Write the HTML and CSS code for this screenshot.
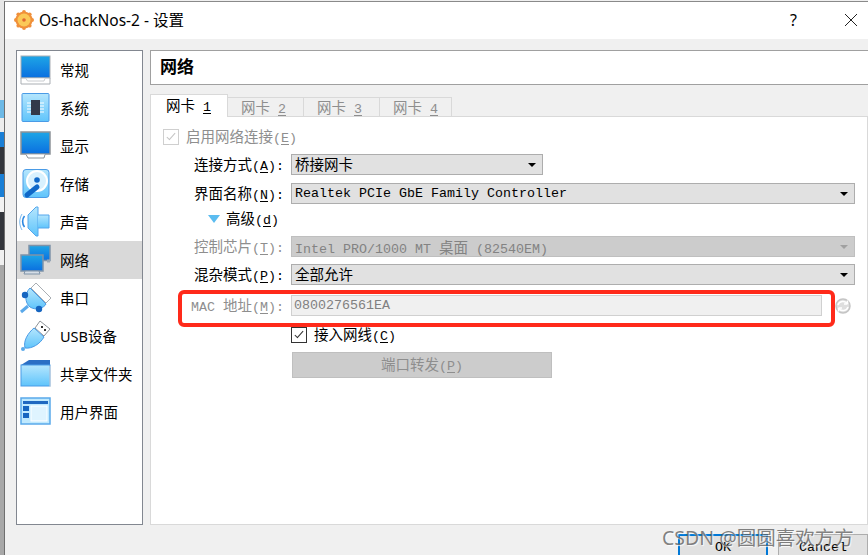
FILE: index.html
```html
<!DOCTYPE html>
<html lang="zh-CN">
<head>
    <meta charset="UTF-8">
    <title>Os-hackNos-2 - 设置</title>
    <link rel="stylesheet" href="styles.css">
</head>
<body>

<div class="desktop">
    <div class="d-light"></div>
    <div class="d-sky"></div>
    <div class="d-pale"></div>
    <div class="d-blue"></div>
    <div class="d-dark"></div>
    <div class="d-blue2"></div>
    <div class="d-white"></div>
    <div class="d-dark2"></div>
    <div class="d-pale2"></div>
    <div class="d-gray"></div>
</div>

<div class="window">
    <div class="titlebar">
        <svg class="app-icon" viewBox="0 0 20 20">
            <circle cx="10" cy="10" r="8.6" fill="#f0903a"/>
            <g fill="#f0903a">
                <circle cx="10" cy="1.9" r="1.9"/><circle cx="10" cy="18.1" r="1.9"/>
                <circle cx="1.9" cy="10" r="1.9"/><circle cx="18.1" cy="10" r="1.9"/>
                <circle cx="4.3" cy="4.3" r="1.9"/><circle cx="15.7" cy="4.3" r="1.9"/>
                <circle cx="4.3" cy="15.7" r="1.9"/><circle cx="15.7" cy="15.7" r="1.9"/>
            </g>
            <circle cx="10" cy="10" r="6.500" fill="#fbc957"/>
            <circle cx="10" cy="10" r="1.800" fill="#e0672f"/>
        </svg>
        <span class="title">Os-hackNos-2 - 设置</span>
        <span class="help">?</span>
        <svg class="close" viewBox="0 0 12 12"><path d="M0 0L12 12M12 0L0 12" stroke="#222" stroke-width="1" fill="none"/></svg>
    </div>

    <div class="content">
        <div class="sidebar">
            <div class="nav-item">
                <svg class="nav-icon" viewBox="0 0 32 32">
                    <defs>
                        <linearGradient id="screen" x1="0" y1="0" x2="0" y2="1"><stop offset="0" stop-color="#1ea6e6"/><stop offset="1" stop-color="#0a6fe0"/></linearGradient>
                        <linearGradient id="pale" x1="0" y1="0" x2="0" y2="1"><stop offset="0" stop-color="#b5e6fd"/><stop offset="1" stop-color="#5fc4fb"/></linearGradient>
                    </defs>
                    <rect x="1" y="2" width="29" height="22" fill="url(#screen)" stroke="#a9aeb3"/>
                    <path d="M1 24H30V30H1Z" fill="#fff" stroke="#a9aeb3"/>
                    <path d="M6 24.500L7.500 27H24L25 24.500" fill="#fff" stroke="#c9ccd0"/>
                </svg>
                <span>常规</span>
            </div>
            <div class="nav-item">
                <svg class="nav-icon" viewBox="0 0 32 32">
                    <rect x="2" y="1.500" width="27" height="28" rx="1" fill="url(#pale)" stroke="#4a9be6"/>
                    <path d="M7 11H24M7 14H24M7 17H24M7 20H24" stroke="#fff"/>
                    <rect x="11" y="8" width="9" height="15" fill="#333a4a"/>
                </svg>
                <span>系统</span>
            </div>
            <div class="nav-item">
                <svg class="nav-icon" viewBox="0 0 32 32">
                    <rect x="1" y="2" width="29" height="22" fill="url(#screen)" stroke="#8d9398" stroke-width="1.500"/>
                    <path d="M6 24.500L8 28H24L25 24.500" fill="#fff" stroke="#8d9398"/>
                </svg>
                <span>显示</span>
            </div>
            <div class="nav-item">
                <svg class="nav-icon" viewBox="0 0 32 32">
                    <rect x="3" y="1.500" width="26" height="28" rx="3" fill="url(#pale)" stroke="#4a9be6"/>
                    <circle cx="17" cy="13" r="11" fill="#fff"/>
                    <circle cx="17" cy="13" r="9" fill="#d8f1fe"/>
                    <circle cx="17" cy="12" r="2.800" fill="#0f68c8"/>
                    <path d="M7 27L17 19" stroke="#0f68c8" stroke-width="5" stroke-linecap="round"/>
                </svg>
                <span>存储</span>
            </div>
            <div class="nav-item">
                <svg class="nav-icon" viewBox="0 0 32 32">
                    <path d="M8 9L8 22L16 30H18V1H16Z" fill="url(#pale)" stroke="#55a6ec"/>
                    <path d="M18 9H29V22H18" fill="url(#pale)" stroke="#55a6ec"/>
                    <path d="M4.500 10C2 13 2 18 4.500 21" fill="none" stroke="#2a86e0" stroke-width="1.600"/>
                    <path d="M2 8C-1 13 -1 19 2 24" fill="none" stroke="#7ab9ee" stroke-width="1"/>
                </svg>
                <span>声音</span>
            </div>
            <div class="nav-item active">
                <svg class="nav-icon" viewBox="0 0 32 32">
                    <rect x="9" y="1.500" width="21" height="15" fill="url(#screen)" stroke="#7f93a8" stroke-width="1.500"/>
                    <path d="M27 17H30" stroke="#9aa8b6" stroke-width="3"/>
                    <rect x="1" y="11" width="22" height="16" fill="url(#screen)" stroke="#7f93a8" stroke-width="1.500"/>
                    <path d="M5 27H19L20 30H4Z" fill="#d5dde6" stroke="#7f93a8"/>
                </svg>
                <span>网络</span>
            </div>
            <div class="nav-item">
                <svg class="nav-icon" viewBox="0 0 32 32">
                    <path d="M16 1L31 16L26 21L11 6Z" fill="#fff" stroke="#a9aeb3"/>
                    <path d="M10 6L26 22C24 26 16 29 10 25C5 21 4 12 10 6Z" fill="url(#pale)" stroke="#4a9be6"/>
                    <path d="M8 24L1 30" stroke="#5aa9ea" stroke-width="3"/>
                    <circle cx="5" cy="13" r="3.200" fill="#1565c0"/>
                    <circle cx="19" cy="27" r="3.200" fill="#1565c0"/>
                </svg>
                <span>串口</span>
            </div>
            <div class="nav-item">
                <svg class="nav-icon" viewBox="0 0 32 32">
                    <path d="M20 1L30 9L24 16L15 8Z" fill="#fff" stroke="#8d9398"/>
                    <rect x="21" y="6" width="2" height="2" fill="#333"/><rect x="24" y="9" width="2" height="2" fill="#333"/>
                    <path d="M14 8L24 17C20 24 12 29 5 28C3 21 8 13 14 8Z" fill="url(#pale)" stroke="#4a9be6"/>
                    <circle cx="3" cy="29" r="2" fill="#5aa9ea"/>
                </svg>
                <span>USB设备</span>
            </div>
            <div class="nav-item">
                <svg class="nav-icon" viewBox="0 0 32 32">
                    <path d="M1 7L9 2H30V8H1Z" fill="#2b6fc4"/>
                    <rect x="1" y="7" width="29" height="21" fill="url(#pale)" stroke="#4a9be6"/>
                    <path d="M30 8V29" stroke="#d0d4d8"/>
                </svg>
                <span>共享文件夹</span>
            </div>
            <div class="nav-item">
                <svg class="nav-icon" viewBox="0 0 32 32">
                    <rect x="1" y="2" width="29" height="26" fill="#bfe9fe" stroke="#5aa9ea" stroke-width="1.500"/>
                    <rect x="3" y="5" width="25" height="3" fill="#1f68c0"/>
                    <rect x="3" y="10" width="6" height="5" fill="#1565c0"/>
                    <rect x="3" y="17" width="6" height="5" fill="#1565c0"/>
                    <rect x="11" y="10" width="16" height="15" fill="#dff4ff" stroke="#fff"/>
                </svg>
                <span>用户界面</span>
            </div>
        </div>

        <div class="main">
            <div class="page-head">网络</div>

            <div class="tabs">
                <div class="tab current"><span class="cn">网卡</span> <u>1</u></div>
                <div class="tab wide"><span class="cn">网卡</span> <u>2</u></div>
                <div class="tab wide"><span class="cn">网卡</span> <u>3</u></div>
                <div class="tab"><span class="cn">网卡</span> <u>4</u></div>
            </div>

            <div class="pane">
                <div class="enable off">
                    <i class="check dim"><i class="tick"></i></i>
                    <span class="cap"><span class="cn">启用网络连接</span>(<u>E</u>)</span>
                </div>

                <div class="row">
                    <span class="lbl"><span class="cn">连接方式</span>(<u>A</u>):</span>
                    <div class="combo short"><span class="cn">桥接网卡</span><i class="arrow"></i></div>
                </div>
                <div class="row second">
                    <span class="lbl"><span class="cn">界面名称</span>(<u>N</u>):</span>
                    <div class="combo"><span>Realtek PCIe GbE Family Controller</span><i class="arrow"></i></div>
                </div>
                <div class="advanced">
                    <i class="tri"></i>
                    <span class="cap"><span class="cn">高级</span>(<u>d</u>)</span>
                </div>
                <div class="row off">
                    <span class="lbl"><span class="cn">控制芯片</span>(<u>T</u>):</span>
                    <div class="combo disabled"><span>Intel PRO/1000 MT <span class="cn">桌面</span> (82540EM)</span><i class="arrow light"></i></div>
                </div>
                <div class="row">
                    <span class="lbl"><span class="cn">混杂模式</span>(<u>P</u>):</span>
                    <div class="combo"><span class="cn">全部允许</span><i class="arrow"></i></div>
                </div>
                <div class="row mac off">
                    <span class="lbl">MAC <span class="cn">地址</span>(<u>M</u>):</span>
                    <div class="mac-field">0800276561EA</div>
                    <svg class="refresh" viewBox="0 0 16 18">
                        <circle cx="8" cy="9" r="7" fill="#dedede" stroke="#c4c4c4" stroke-width="1.500"/>
                        <path d="M3 8C4 4 10 3 12.500 7M12.500 7V3.500M12.500 7H9" fill="none" stroke="#fff" stroke-width="1.500"/>
                        <path d="M13 10C12 14 6 15 3.500 11M3.500 11V14.500M3.500 11H7" fill="none" stroke="#fff" stroke-width="1.500"/>
                    </svg>
                </div>
                <div class="cable">
                    <i class="check"><i class="tick dark"></i></i>
                    <span class="cap"><span class="cn">接入网线</span>(<u>C</u>)</span>
                </div>
                <div class="forward off"><span class="cn">端口转发</span>(<u>P</u>)</div>
            </div>
        </div>
    </div>

    <div class="footer">
        <div class="btn default">OK</div>
        <div class="btn">Cancel</div>
    </div>
</div>

<div class="redbox"></div>
<div class="watermark">CSDN @圆圆喜欢方方</div>

</body>
</html>
```

FILE: styles.css
```css
html, body {
    margin: 0;
    padding: 0;
}
body {
    width: 868px;
    height: 555px;
    display: flex;
    overflow: hidden;
    position: relative;
    font-family: "Liberation Mono", "Noto Sans CJK SC", monospace;
    font-size: 13.33px;
    color: #000;
    background: #f0f0f0;
}
u {
    text-underline-offset: 2px;
}
.cn {
    font-family: "Noto Sans CJK SC", sans-serif;
    font-size: 14.5px;
}

/* bit of the desktop left of the dialog */
.desktop {
    width: 4px;
    flex: none;
    display: flex;
    flex-direction: column;
}
.d-light { height: 100px; background: #e6e6e6; }
.d-sky { height: 18px; background: #6db9e6; }
.d-pale { height: 14px; background: #ededed; }
.d-blue { height: 15px; background: #1a7fd6; }
.d-dark { height: 27px; background: #33363c; }
.d-blue2 { height: 23px; background: #1a7fd6; }
.d-white { height: 15px; background: #f2f2f2; }
.d-dark2 { height: 38px; background: #33363c; }
.d-pale2 { height: 15px; background: #f0f0f0; }
.d-gray { flex: 1; background: #a8a8a8; }

.window {
    flex: 1;
    height: 554px;
    margin-top: 1px;
    border-left: 1px solid #6f6f6f;
    border-top: 1px solid #8a8a8a;
    box-sizing: border-box;
    display: flex;
    flex-direction: column;
    overflow: hidden;
}
.titlebar {
    height: 37px;
    flex: none;
    box-sizing: border-box;
    padding: 0 0 2px 9px;
    background: #fff;
    display: flex;
    align-items: center;
}
.app-icon {
    width: 20px;
    height: 20px;
    flex: none;
}
.title {
    margin-left: 5px;
    font-family: "Noto Sans", "Noto Sans CJK SC", sans-serif;
    font-size: 15.5px;
    flex: 1;
}
.help {
    font-family: "Noto Sans", sans-serif;
    font-size: 16px;
    margin-right: 48px;
}
.close {
    width: 12px;
    height: 12px;
    margin-right: 11px;
}

.content {
    height: 486px;
    flex: none;
    display: flex;
    padding: 11px 0 0 11px;
    box-sizing: border-box;
    gap: 7px;
}
.sidebar {
    width: 127px;
    height: 475px;
    box-sizing: border-box;
    flex: none;
    background: #fff;
    border: 1px solid #828790;
    font-family: "Noto Sans", "Noto Sans CJK SC", sans-serif;
    font-size: 14.5px;
}
.nav-item {
    height: 38px;
    display: flex;
    align-items: center;
    padding-left: 3px;
    gap: 8px;
    white-space: nowrap;
}
.nav-item span {
    margin-top: -2px;
}
.nav-item.active {
    background: #d9d9d9;
}
.nav-icon {
    width: 32px;
    height: 32px;
    flex: none;
    overflow: visible;
}

.main {
    flex: 1;
    display: flex;
    flex-direction: column;
    min-width: 0;
}
.page-head {
    height: 35px;
    flex: none;
    box-sizing: border-box;
    background: #fff;
    border: 1px solid #a0a0a0;
    border-right: none;
    padding-left: 9px;
    font-family: "Noto Sans CJK SC", sans-serif;
    font-weight: 700;
    font-size: 17px;
    line-height: 30px;
}
.tabs {
    display: flex;
    align-items: flex-end;
    height: 23px;
    margin-top: 9px;
    flex: none;
    color: #8e8e8e;
    position: relative;
    z-index: 1;
}
.tab {
    height: 20px;
    width: 72px;
    box-sizing: border-box;
    border: 1px solid #d9d9d9;
    border-left: none;
    padding-left: 13px;
    line-height: 17px;
    white-space: nowrap;
}
.tab.wide {
    width: 76px;
}
.tab.current {
    width: 78px;
    height: 23px;
    background: #fff;
    color: #000;
    border-left: 1px solid #d9d9d9;
    border-bottom: none;
    padding-left: 15px;
    line-height: 19px;
}
.pane {
    height: 409px;
    flex: none;
    box-sizing: border-box;
    margin-top: -1px;
    background: #fff;
    border: 1px solid #d9d9d9;
    padding-top: 10px;
}
.off {
    color: #8e8e8e;
}
.cap {
    margin-top: -3px;
}
.enable {
    display: flex;
    align-items: center;
    height: 20px;
    padding-left: 12px;
    white-space: pre;
}
.check {
    width: 16px;
    height: 16px;
    box-sizing: border-box;
    border: 1px solid #333;
    background: #fff;
    margin-right: 7px;
    flex: none;
    display: flex;
    justify-content: center;
}
.check.dim {
    border-color: #cfcfcf;
}
.tick {
    display: block;
    width: 4px;
    height: 9px;
    margin-top: 1px;
    box-sizing: border-box;
    border-right: 1.500px solid #c4c4c4;
    border-bottom: 1.500px solid #c4c4c4;
    transform: rotate(42deg);
}
.tick.dark {
    border-color: #333;
}
.row {
    display: flex;
    align-items: center;
    height: 21px;
    margin-top: 7px;
}
.row.second {
    margin-top: 8px;
}
.lbl {
    width: 133px;
    flex: none;
    margin-top: -3px;
    margin-right: 7px;
    text-align: right;
    white-space: nowrap;
}
.combo {
    width: 564px;
    height: 21px;
    box-sizing: border-box;
    display: flex;
    align-items: center;
    justify-content: space-between;
    background: #e1e1e1;
    border: 1px solid #adadad;
    padding: 0 5px 0 3px;
    white-space: pre;
}
.combo > .cn {
    margin-top: -2px;
}
.combo.short {
    width: 252px;
}
.combo.disabled {
    background: #cccccc;
    border-color: #bfbfbf;
    color: #838383;
}
.arrow {
    width: 0;
    height: 0;
    border-left: 4px solid transparent;
    border-right: 4px solid transparent;
    border-top: 4px solid #000;
    margin-right: 1px;
}
.arrow.light {
    border-top-color: #a0a0a0;
}
.advanced {
    display: flex;
    align-items: center;
    height: 20px;
    margin-top: 5px;
    padding-left: 57px;
    white-space: pre;
}
.tri {
    width: 0;
    height: 0;
    border-left: 6px solid transparent;
    border-right: 6px solid transparent;
    border-top: 8px solid #5bbcf0;
    margin-right: 6px;
}
.row.mac {
    margin-top: 10px;
}
.mac-field {
    width: 531px;
    height: 21px;
    box-sizing: border-box;
    background: #f0f0f0;
    border: 1px solid #d0d0d0;
    padding-left: 2px;
    line-height: 19px;
    color: #808080;
    flex: none;
}
.refresh {
    width: 16px;
    height: 18px;
    margin-left: 13px;
    flex: none;
}
.cable {
    display: flex;
    align-items: center;
    height: 16px;
    margin-top: 11px;
    padding-left: 140px;
    white-space: pre;
}
.forward {
    width: 260px;
    height: 26px;
    box-sizing: border-box;
    margin: 9px 0 0 141px;
    background: #cccccc;
    border: 1px solid #bfbfbf;
    text-align: center;
    line-height: 22px;
}

.footer {
    display: flex;
    justify-content: flex-end;
    gap: 10px;
    margin-top: 9px;
    flex: none;
}
.btn {
    width: 90px;
    height: 30px;
    box-sizing: border-box;
    background: #e1e1e1;
    border: 1px solid #adadad;
    text-align: center;
    line-height: 26px;
}
.btn.default {
    border: 2px solid #0078d7;
    line-height: 24px;
}

/* annotation and watermark on top of the screenshot */
.redbox {
    position: absolute;
    left: 178px;
    top: 290px;
    width: 657px;
    height: 37px;
    box-sizing: border-box;
    border: 4px solid #ff2a1a;
    border-radius: 6px;
}
.watermark {
    position: absolute;
    left: 662px;
    top: 522px;
    font-family: "Noto Sans", "Noto Sans CJK SC", sans-serif;
    font-size: 19.5px;
    white-space: nowrap;
    color: rgba(90, 90, 90, 0.75);
    text-shadow: 1px 1px 1px rgba(255, 255, 255, 0.8);
}
```
